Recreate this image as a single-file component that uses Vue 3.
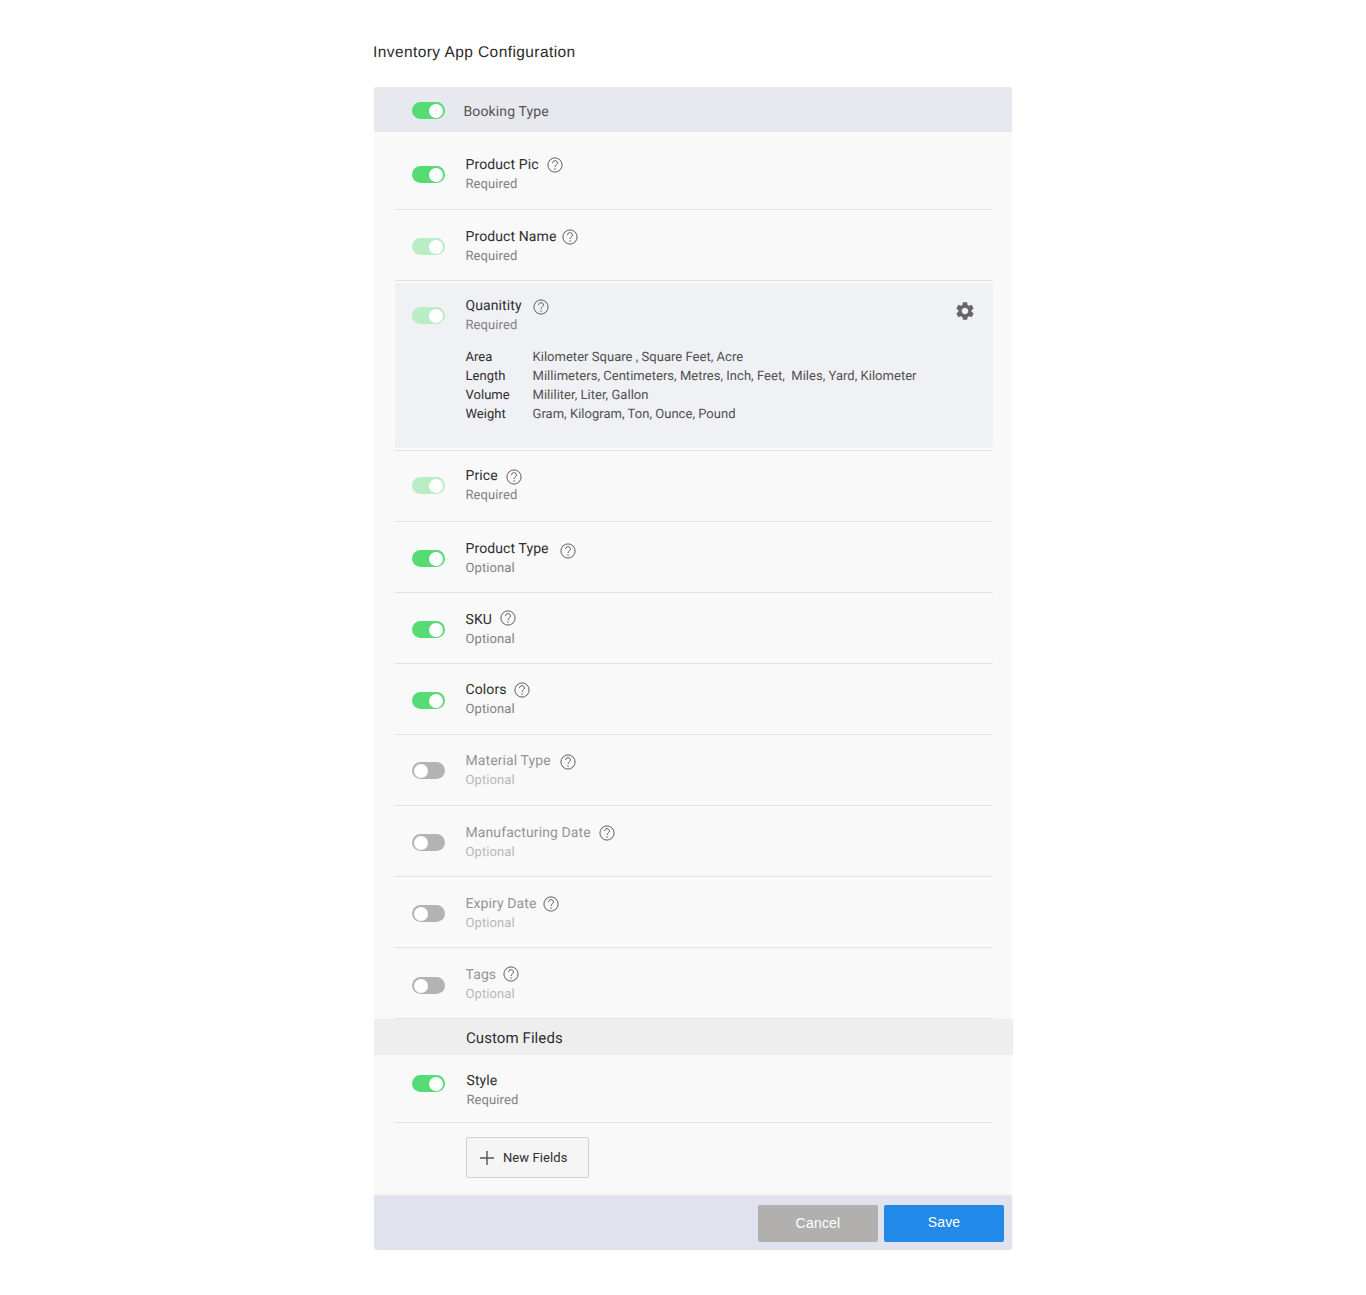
<script setup>
const rows = [
  { name: 'Product Pic', sub: 'Required', state: 'on', h: 78, top: 23, tog: 33.5, gap: 8, dy: 0 },
  { name: 'Product Name', sub: 'Required', state: 'dim', h: 71, top: 17, tog: 27.5, gap: 5.5, dy: 0 },
  { name: 'Quanitity', sub: 'Required', state: 'dim', h: 170, top: 15, tog: 25.5, gap: 11, dy: 1, tint: true, units: [
    ['Area', 'Kilometer Square , Square Feet, Acre'],
    ['Length', 'Millimeters, Centimeters, Metres, Inch, Feet,  Miles, Yard, Kilometer'],
    ['Volume', 'Mililiter, Liter, Gallon'],
    ['Weight', 'Gram, Kilogram, Ton, Ounce, Pound'],
  ] },
  { name: 'Price', sub: 'Required', state: 'dim', h: 71, top: 15, tog: 25.5, gap: 8, dy: 1 },
  { name: 'Product Type', sub: 'Optional', state: 'on', h: 71, top: 17, tog: 27.5, gap: 11, dy: 2 },
  { name: 'SKU', sub: 'Optional', state: 'on', h: 71, top: 17, tog: 27.5, gap: 8, dy: -1.5 },
  { name: 'Colors', sub: 'Optional', state: 'on', h: 71, top: 16, tog: 27.5, gap: 7, dy: 0 },
  { name: 'Material Type', sub: 'Optional', state: 'off', h: 71, top: 16, tog: 27, gap: 9, dy: 1 },
  { name: 'Manufacturing Date', sub: 'Optional', state: 'off', h: 71, top: 17, tog: 27.5, gap: 8, dy: 0 },
  { name: 'Expiry Date', sub: 'Optional', state: 'off', h: 71, top: 17, tog: 27.5, gap: 6, dy: 0 },
  { name: 'Tags', sub: 'Optional', state: 'off', h: 71, top: 17, tog: 28.5, gap: 7, dy: -1 },
]
const gear = 'M19.14 12.94c.04-.3.06-.61.06-.94 0-.32-.02-.64-.07-.94l2.03-1.58a.49.49 0 0 0 .12-.61l-1.92-3.32a.488.488 0 0 0-.59-.22l-2.39.96c-.5-.38-1.03-.7-1.62-.94l-.36-2.54a.484.484 0 0 0-.48-.41h-3.84c-.24 0-.43.17-.47.41l-.36 2.54c-.59.24-1.13.57-1.62.94l-2.39-.96c-.22-.08-.47 0-.59.22L2.74 8.87c-.12.21-.08.47.12.61l2.03 1.58c-.05.3-.09.63-.09.94s.02.64.07.94l-2.03 1.58a.49.49 0 0 0-.12.61l1.92 3.32c.12.22.37.29.59.22l2.39-.96c.5.38 1.03.7 1.62.94l.36 2.54c.05.24.24.41.48.41h3.84c.24 0 .44-.17.47-.41l.36-2.54c.59-.24 1.13-.56 1.62-.94l2.39.96c.22.08.47 0 .59-.22l1.92-3.32c.12-.22.07-.47-.12-.61l-2.01-1.58zM12 15.6c-1.98 0-3.6-1.62-3.6-3.6s1.62-3.6 3.6-3.6 3.6 1.62 3.6 3.6-1.62 3.6-3.6 3.6z'
</script>

<template>
  <div class="page">
    <h1 class="title">Inventory App Configuration</h1>
    <section class="panel">
      <header class="head">
        <span class="toggle on"><i></i></span>
        <span class="head-label">Booking Type</span>
      </header>

      <div class="list">
        <div
          v-for="r in rows"
          :key="r.name"
          class="row"
          :class="{ disabled: r.state === 'off' }"
          :style="{ height: r.h + 'px' }"
        >
          <div class="row-in" :class="{ tint: r.tint }" :style="{ paddingTop: r.top - (r.tint ? 2 : 0) + 'px' }">
            <span
              class="toggle"
              :class="r.state"
              :style="{ marginTop: r.tog - r.top + 'px' }"
            ><i></i></span>
            <div class="txt">
              <div class="name-line">
                <span class="name">{{ r.name }}</span>
                <svg class="help" :style="{ marginLeft: r.gap + 'px', top: r.dy - 1 + 'px' }" width="16" height="16" viewBox="0 0 16 16" fill="none">
                  <circle cx="8" cy="8" r="7.1" stroke="#5f5f5f" stroke-width="1" />
                  <path d="M5.5 6.1c0-1.4 1.1-2.4 2.5-2.4s2.5.9 2.5 2.2c0 2-2.5 2-2.5 4.1" stroke="#5f5f5f" stroke-width="1" />
                  <circle cx="8" cy="12" r=".75" fill="#5f5f5f" />
                </svg>
              </div>
              <div class="sub">{{ r.sub }}</div>
              <div v-if="r.units" class="units">
                <div v-for="u in r.units" :key="u[0]" class="unit">
                  <span class="unit-k">{{ u[0] }}</span>
                  <span class="unit-v">{{ u[1] }}</span>
                </div>
              </div>
            </div>
            <svg v-if="r.tint" class="gear" width="22" height="22" viewBox="0 0 24 24">
              <path :d="gear" fill="#666" />
            </svg>
          </div>
        </div>
      </div>

      <div class="custom-head">Custom Fileds</div>

      <div class="list">
        <div class="row style-row">
          <div class="row-in">
            <span class="toggle on style-toggle"><i></i></span>
            <div class="txt style-txt">
              <div class="name-line"><span class="name">Style</span></div>
              <div class="sub">Required</div>
            </div>
          </div>
        </div>
      </div>

      <div class="add-wrap">
        <button class="add" type="button">
          <svg width="16" height="16" viewBox="0 0 16 16">
            <path d="M8 1v14M1 8h14" stroke="#555" stroke-width="1.4" />
          </svg>
          <span>New Fields</span>
        </button>
      </div>

      <footer class="foot">
        <button class="btn cancel" type="button"><span>Cancel</span></button>
        <button class="btn save" type="button"><span>Save</span></button>
      </footer>
    </section>
  </div>
</template>

<style>
html, body { margin: 0; background: #fff; }
</style>

<style scoped>
.page {
  width: 640px;
  margin-left: 373px;
  padding: 43px 0 45px;
  font-family: Roboto, sans-serif;
  color: #333;
  text-rendering: geometricPrecision;
}
.title {
  margin: 0 0 25px;
  height: 19px;
  font: 400 15.5px/19px "Liberation Sans", Arial, sans-serif;
  letter-spacing: 0.42px;
  color: #2b2b2b;
}
.panel {
  width: 638px;
  margin-left: 1px;
  background: #f9f9f9;
  border-radius: 3px;
}
.head {
  height: 45px;
  display: flex;
  align-items: center;
  padding-left: 38px;
  background: #e8e9ee;
  border-radius: 3px 3px 0 0;
}
.head .toggle { margin-top: 2px; }
.head-label {
  margin-left: 18.5px;
  font-size: 14px;
  letter-spacing: 0.13px;
  color: #555;
  position: relative;
  top: 2px;
}
.list { padding: 0 19px 0 21px; }
.row {
  box-sizing: border-box;
  display: flow-root;
  border-bottom: 1px solid #e3e3e3;
  padding-bottom: 1px;
}
.row-in {
  display: flex;
  align-items: flex-start;
  padding-left: 17px;
  box-sizing: border-box;
  height: 100%;
  position: relative;
}
.row-in.tint {
  background: #f0f1f5;
  margin-top: 2px;
  height: calc(100% - 3px);
  border-radius: 2px;
}
.toggle {
  flex: none;
  display: block;
  position: relative;
  width: 33px;
  height: 17px;
  border-radius: 9px;
  background: #55dc75;
}
.toggle i {
  position: absolute;
  top: 2px;
  right: 2px;
  width: 14px;
  height: 14px;
  border-radius: 50%;
  background: #fff;
}
.toggle.dim { background: #b9edc6; }
.toggle.off { background: #b3b3b3; }
.toggle.off i { right: auto; left: 2px; }
.txt { margin: 1px 0 0 20.5px; flex: 1; }
.name-line {
  display: flex;
  align-items: center;
  height: 19px;
}
.name {
  font-size: 14px;
  line-height: 19px;
  letter-spacing: 0.1px;
  color: #2e2e2e;
}
.help { flex: none; position: relative; }
.sub {
  font-size: 13px;
  line-height: 19px;
  letter-spacing: 0.1px;
  color: #828282;
}
.disabled .name { color: #959595; }
.disabled .sub { color: #b8b8b8; }
.units { margin-top: 13px; }
.unit {
  display: flex;
  font-size: 13px;
  line-height: 19px;
  letter-spacing: 0.03px;
  white-space: pre;
}
.unit-k { width: 67px; color: #2e2e2e; }
.unit-v { color: #505050; }
.gear { position: absolute; top: 17px; right: 17px; }
.custom-head {
  width: 639px;
  height: 36px;
  box-sizing: border-box;
  padding-left: 92px;
  font-size: 15px;
  line-height: 39px;
  letter-spacing: 0.08px;
  color: #2e2e2e;
  background: #eee;
}
.style-row { height: 68px; }
.style-toggle { margin-top: 20px; }
.style-txt { margin-left: 21.5px; padding-top: 16px; }
.add-wrap { padding: 14px 0 18px 92px; }
.add {
  box-sizing: border-box;
  width: 123px;
  height: 41px;
  display: flex;
  align-items: center;
  padding: 0 0 0 12px;
  background: #f5f5f5;
  border: 1px solid #d2d2d2;
  border-radius: 2px;
  font-family: Roboto, sans-serif;
  font-size: 13px;
  letter-spacing: 0.1px;
  color: #2e2e2e;
}
.add span { margin-left: 8px; }
.foot {
  height: 54px;
  box-sizing: border-box;
  padding: 9px 8px 8px 0;
  display: flex;
  justify-content: flex-end;
  gap: 6px;
  background: #e0e3ed;
  border-radius: 0 0 3px 3px;
  box-shadow: 0 -1px 2px rgba(0, 0, 0, 0.08);
}
.btn {
  width: 120px;
  height: 37px;
  border: 0;
  border-radius: 2px;
  color: #fff;
  font: 400 14px "Liberation Sans", Arial, sans-serif;
  letter-spacing: 0.2px;
}
.btn span { position: relative; }
.cancel { background: #b1b0ae; }
.cancel span { top: -1px; }
.save { background: #2189e8; }
.save span { top: -2px; }
</style>
